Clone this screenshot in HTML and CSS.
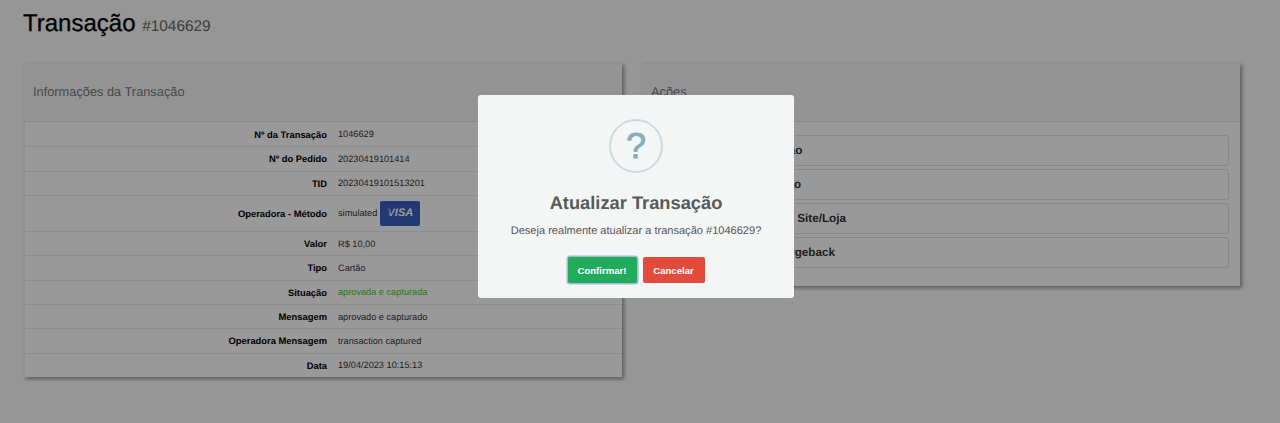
FILE: index.html
```html
<!DOCTYPE html>
<html lang="en">
<head>
    <meta charset="UTF-8">
    <meta name="viewport" content="width=device-width, initial-scale=1.0">
    <title>Transação #1046629</title>
    <link rel="stylesheet" href="styles.css">
</head>
<body>
    <div class="page">
        <div class="page-header">
            <h1>Transação <small>#1046629</small></h1>
        </div>

        <div class="columns">
            <!-- Transaction details -->
            <div class="panel">
                <div class="panel-heading">Informações da Transação</div>
                <div class="details">
                    <div class="row"><b>Nº da Transação</b><span>1046629</span></div>
                    <div class="row"><b>Nº do Pedido</b><span>20230419101414</span></div>
                    <div class="row"><b>TID</b><span>20230419101513201</span></div>
                    <div class="row method-row">
                        <b>Operadora - Método</b>
                        <div class="method">simulated <span class="visa"><i><em>V</em>ISA</i></span></div>
                    </div>
                    <div class="row"><b>Valor</b><span>R$ 10,00</span></div>
                    <div class="row"><b>Tipo</b><span>Cartão</span></div>
                    <div class="row"><b>Situação</b><span class="approved">aprovada e capturada</span></div>
                    <div class="row"><b>Mensagem</b><span>aprovado e capturado</span></div>
                    <div class="row"><b>Operadora Mensagem</b><span>transaction captured</span></div>
                    <div class="row"><b>Data</b><span>19/04/2023 10:15:13</span></div>
                </div>
            </div>

            <!-- Actions -->
            <div class="panel">
                <div class="panel-heading">Ações</div>
                <div class="actions">
                    <a class="action">Atualizar Transação</a>
                    <a class="action">Estornar Transação</a>
                    <a class="action">Enviar Notificação Site/Loja</a>
                    <a class="action">Marcar como Chargeback</a>
                </div>
            </div>
        </div>
    </div>

    <!-- Confirm dialog -->
    <div class="overlay">
        <div class="modal">
            <div class="modal-icon">?</div>
            <h2>Atualizar Transação</h2>
            <p>Deseja realmente atualizar a transação #1046629?</p>
            <div class="modal-buttons">
                <button class="btn btn-confirm">Confirmar!</button>
                <button class="btn btn-cancel">Cancelar</button>
            </div>
        </div>
    </div>
</body>
</html>
```

FILE: styles.css
```css
/* Basic styling */
* { box-sizing: border-box; margin: 0; padding: 0; }
body { background-color: #fbfbfb; font-family: "Liberation Sans", Arial, sans-serif; color: #333333; text-rendering: geometricPrecision; }
.page { height: 423px; padding: 0 40px 0 24px; }

/* Page header */
.page-header { height: 49px; padding-top: 9px; border-bottom: 1px solid #ffffff; margin-bottom: 14px; }
h1 { margin-left: -1px; font-size: 24px; line-height: 30px; font-weight: 400; color: #000000; -webkit-text-stroke: 0.3px #000000; }
h1 small { font-size: 15.4px; color: #666666; -webkit-text-stroke: 0; }

/* Panels */
.columns { display: grid; grid-template-columns: 598px 598px; column-gap: 20px; align-items: start; }
.panel { background-color: #ffffff; box-shadow: 2px 2px 4px rgba(0, 0, 0, 0.4); border: 1px solid #f0f0f0; border-width: 1px 0 0 1px; }
.panel-heading { height: 58px; padding: 0 8px; line-height: 56px; font-size: 12.8px; color: #777777; background-color: #f6f6f6; border-bottom: 1px solid #e4e4e4; }

/* Detail rows */
.details { font-size: 9.2px; }
.row { display: grid; grid-template-columns: 302px 1fr; column-gap: 11px; align-items: center; height: 24.33px; border-top: 1px solid #ebebeb; }
.row:first-child { border-top: none; }
.row.method-row { height: 36px; }
.row b { text-align: right; font-size: 9.4px; color: #000000; }
.approved { color: #45d010; }
.method { display: flex; align-items: center; gap: 3px; }
.visa { display: flex; justify-content: center; align-items: center; width: 40px; height: 25px; border-radius: 2px; background-color: #3a5fc4; color: #ffffff; font-size: 11px; font-weight: 700; }
.visa em { font-style: inherit; color: transparent; background: linear-gradient(100deg, #f2a33a 30%, #ffffff 50%); -webkit-background-clip: text; background-clip: text; }

/* Action list */
.actions { display: flex; flex-direction: column; gap: 3px; padding: 13px 11px 18px 8px; }
.action { display: block; height: 31px; line-height: 30px; padding-left: 40px; font-size: 11.7px; font-weight: 700; color: #333333; border: 1px solid #e2e2e2; border-radius: 3px; }

/* Dialog */
.overlay { position: fixed; top: 0; left: 0; right: 0; bottom: 0; display: flex; justify-content: center; align-items: flex-start; padding: 95px 8px 0 0; background-color: rgba(0, 0, 0, 0.4); }
.modal { width: 316px; height: 203px; padding-top: 24px; border-radius: 3px; background-color: #f4f6f6; text-align: center; }
.modal-icon { width: 54px; height: 54px; margin: 0 auto; border: 2px solid #c9dae1; border-radius: 50%; font-size: 36px; line-height: 50px; color: #87adbd; -webkit-text-stroke: 0.8px #87adbd; }
.modal h2 { margin-top: 18px; font-size: 18.3px; line-height: 24px; font-weight: 700; color: #595959; }
.modal p { margin-top: 8px; font-size: 11.05px; line-height: 16px; color: #545454; }
.modal-buttons { display: flex; justify-content: center; gap: 6px; margin-top: 18px; }
.btn { height: 26px; border: none; border-radius: 2px; font-family: inherit; font-size: 9.6px; font-weight: 700; color: #ffffff; }
.btn-confirm { width: 69px; background-color: #23ab5c; box-shadow: 0 0 0 1.5px #9dbcd8; }
.btn-cancel { width: 62px; background-color: #e24a3b; }
```
